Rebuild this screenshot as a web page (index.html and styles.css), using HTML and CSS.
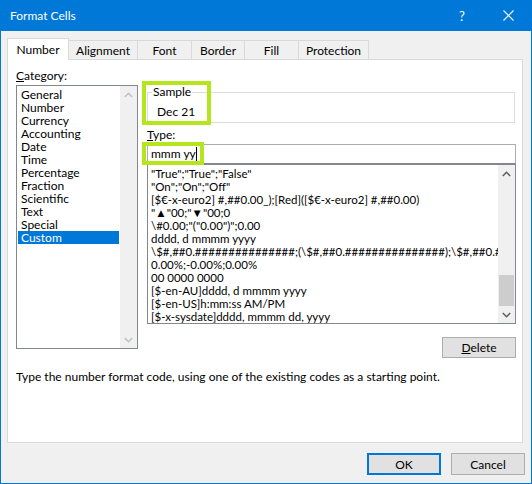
FILE: index.html
```html
<!DOCTYPE html>
<html lang="en">
<head>
    <meta charset="UTF-8">
    <title>Format Cells</title>
    <link rel="stylesheet" href="styles.css">
</head>
<body>
    <div class="window">
        <div class="titlebar">
            <span class="title">Format Cells</span>
            <span class="title-btn help">?</span>
            <span class="title-btn">
                <svg width="11" height="11" viewBox="0 0 11 11"><path d="M0.5 0.5 L10.5 10.5 M10.5 0.5 L0.5 10.5" stroke="#fff" stroke-width="1.1" fill="none"/></svg>
            </span>
        </div>

        <div class="tabs">
            <div class="tab tab-number active">Number</div>
            <div class="tab tab-alignment">Alignment</div>
            <div class="tab tab-font">Font</div>
            <div class="tab tab-border">Border</div>
            <div class="tab tab-fill">Fill</div>
            <div class="tab tab-protection">Protection</div>
        </div>

        <div class="panel">
            <div class="panel-main">
                <!-- category list -->
                <div class="category">
                    <div class="label category-label"><u>C</u>ategory:</div>
                    <div class="listbox category-list">
                        <ul class="items">
                            <li>General</li>
                            <li>Number</li>
                            <li>Currency</li>
                            <li>Accounting</li>
                            <li>Date</li>
                            <li>Time</li>
                            <li>Percentage</li>
                            <li>Fraction</li>
                            <li>Scientific</li>
                            <li>Text</li>
                            <li>Special</li>
                            <li class="selected">Custom</li>
                        </ul>
                        <div class="scrollbar disabled">
                            <span class="arrow"><svg width="9" height="6" viewBox="0 0 9 6"><path d="M0.8 5 L4.5 1.3 L8.2 5" stroke="currentColor" stroke-width="1.6" fill="none"/></svg></span>
                            <span class="arrow"><svg width="9" height="6" viewBox="0 0 9 6"><path d="M0.8 1 L4.5 4.7 L8.2 1" stroke="currentColor" stroke-width="1.6" fill="none"/></svg></span>
                        </div>
                    </div>
                </div>

                <!-- sample / type -->
                <div class="details">
                    <fieldset class="sample">
                        <legend>Sample</legend>
                        <div class="sample-value">Dec 21</div>
                    </fieldset>
                    <div class="label type-label"><u>T</u>ype:</div>
                    <div class="type-input">mmm yy<span class="caret"></span></div>
                    <div class="listbox format-list">
                        <div class="format-items">
                            <ul class="items">
                                <li>"True";"True";"False"</li>
                                <li>"On";"On";"Off"</li>
                                <li>[$€-x-euro2] #,##0.00_);[Red]([$€-x-euro2] #,##0.00)</li>
                                <li>"▲"00;"▼"00;0</li>
                                <li>\#0.00;"("0.00")";0.00</li>
                                <li>dddd, d mmmm yyyy</li>
                                <li>\$#,##0.###############;(\$#,##0.###############);\$#,##0.###############</li>
                                <li>0.00%;-0.00%;0.00%</li>
                                <li>00 0000 0000</li>
                                <li>[$-en-AU]dddd, d mmmm yyyy</li>
                                <li>[$-en-US]h:mm:ss AM/PM</li>
                                <li>[$-x-sysdate]dddd, mmmm dd, yyyy</li>
                            </ul>
                        </div>
                        <div class="scrollbar">
                            <span class="arrow"><svg width="9" height="6" viewBox="0 0 9 6"><path d="M0.8 5 L4.5 1.3 L8.2 5" stroke="currentColor" stroke-width="1.6" fill="none"/></svg></span>
                            <span class="thumb"></span>
                            <span class="arrow"><svg width="9" height="6" viewBox="0 0 9 6"><path d="M0.8 1 L4.5 4.7 L8.2 1" stroke="currentColor" stroke-width="1.6" fill="none"/></svg></span>
                        </div>
                    </div>
                    <div class="delete-row">
                        <button class="btn btn-delete"><u>D</u>elete</button>
                    </div>

                    <!-- green highlight marks -->
                    <span class="mark mark-sample"></span>
                    <span class="mark mark-type"></span>
                </div>
            </div>
            <p class="hint">Type the number format code, using one of the existing codes as a starting point.</p>
        </div>

        <div class="footer">
            <button class="btn btn-default">OK</button>
            <button class="btn">Cancel</button>
        </div>
    </div>
</body>
</html>
```

FILE: styles.css
```css
body {
    margin: 0;
    font-family: Lato, "Noto Sans", sans-serif;
    font-size: 12px;
    color: #000;
}
.window {
    width: 532px;
    height: 484px;
    box-sizing: border-box;
    border: 1px solid #0078d7;
    border-top: 0;
    background-color: #f0f0f0;
}
.titlebar {
    height: 31px;
    background-color: #0078d7;
    color: #fff;
    display: flex;
    align-items: center;
    padding-left: 9px;
}
.title {
    flex: 1;
    font-size: 12px;
}
.title-btn {
    width: 46px;
    height: 31px;
    display: flex;
    align-items: center;
    justify-content: center;
}
.help {
    font-size: 13px;
}

/* tabs */
.tabs {
    display: flex;
    align-items: flex-end;
    height: 21px;
    margin-top: 7px;
    padding-left: 6px;
}
.tab {
    box-sizing: border-box;
    height: 19px;
    padding-top: 2px;
    line-height: 16px;
    text-align: center;
    background-color: #f0f0f0;
    border: 1px solid #d9d9d9;
    border-bottom: 0;
    margin-left: -1px;
}
.tab.active {
    height: 22px;
    padding-top: 3px;
    margin-left: 0;
    margin-bottom: -1px;
    background-color: #fff;
    position: relative;
    z-index: 1;
}
.tab-number { width: 62px; }
.tab-alignment { width: 70px; }
.tab-font { width: 55px; }
.tab-border { width: 54px; }
.tab-fill { width: 55px; }
.tab-protection { width: 71px; }

/* panel */
.panel {
    box-sizing: border-box;
    height: 384px;
    margin: 0 8px 0 6px;
    padding: 0 0 0 8px;
    background-color: #fff;
    border: 1px solid #d9d9d9;
}
.panel-main {
    display: flex;
    gap: 9px;
}
.label {
    line-height: 16px;
}
.category {
    width: 122px;
    padding-top: 8px;
}
.category-label {
    margin-bottom: 1px;
}
.listbox {
    box-sizing: border-box;
    display: flex;
    border: 1px solid #828790;
    background-color: #fff;
}
.category-list {
    height: 264px;
}
.items {
    list-style: none;
    margin: 0;
    padding: 0;
    flex: 1;
    min-width: 0;
}
.items li {
    height: 13px;
    line-height: 13px;
    white-space: nowrap;
}
.category-list .items {
    padding: 2px 1px 0 1px;
}
.category-list .items li {
    padding-left: 3px;
}
.items li.selected {
    background-color: #0078d7;
    color: #fff;
}
.scrollbar {
    width: 17px;
    display: flex;
    flex-direction: column;
    justify-content: space-between;
    background-color: #f0f0f0;
    color: #606060;
}
.scrollbar.disabled {
    color: #c0c0c0;
}
.arrow {
    height: 17px;
    display: flex;
    align-items: center;
    justify-content: center;
}
.thumb {
    height: 31px;
    margin: auto 1px 0 1px;
    background-color: #cdcdcd;
}

/* right column */
.details {
    width: 369px;
    position: relative;
}
.sample {
    margin: 25px 1px 0 0;
    padding: 0 0 2px 9px;
    border: 1px solid #dcdcdc;
}
.sample legend {
    line-height: 14px;
    padding: 0 1px;
    margin-left: -5px;
}
.sample-value {
    line-height: 16px;
    padding-top: 5px;
}
.type-label {
    margin-top: 4px;
}
.type-input {
    box-sizing: border-box;
    height: 20px;
    margin-top: 1px;
    padding-left: 3px;
    line-height: 18px;
    border: 1px solid #abadb3;
    border-bottom-color: #828790;
}
.caret {
    display: inline-block;
    width: 1px;
    height: 14px;
    background-color: #000;
    vertical-align: -3px;
}
.format-list {
    height: 160px;
}
.format-items {
    flex: 1;
    min-width: 0;
    overflow: hidden;
    margin-top: 4px;
}
.format-list .items {
    margin-top: -2px;
    padding-left: 3px;
    font-size: 11.5px;
}
.delete-row {
    display: flex;
    justify-content: flex-end;
    margin-top: 13px;
}
.mark {
    position: absolute;
    box-sizing: border-box;
    border: 4px solid #b5e61d;
}
.mark-sample {
    left: -5px;
    top: 21px;
    width: 69px;
    height: 44px;
}
.mark-type {
    left: -5px;
    top: 82px;
    width: 62px;
    height: 23px;
}
.hint {
    margin: 11px 0 0 0;
    line-height: 16px;
}

/* buttons */
.btn {
    box-sizing: border-box;
    width: 74px;
    height: 22px;
    padding: 0;
    font-family: inherit;
    font-size: 12px;
    color: #000;
    background-color: #e1e1e1;
    border: 1px solid #adadad;
}
.btn-delete {
    height: 21px;
}
.btn-default {
    border: 2px solid #0078d7;
}
.footer {
    display: flex;
    justify-content: flex-end;
    gap: 10px;
    margin-top: 10px;
    padding-right: 6px;
}
```
